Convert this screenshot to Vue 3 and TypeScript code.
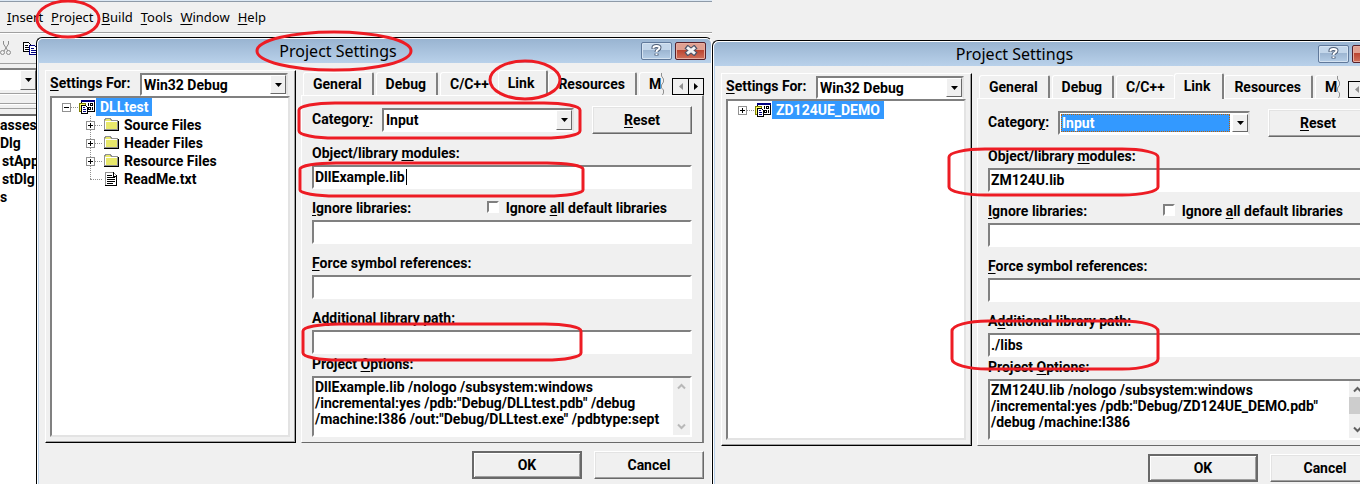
<script setup lang="ts">
import { h, reactive, type FunctionalComponent } from 'vue'

interface TreeItem {
  label: string
  kind: 'folder' | 'file'
}

interface DialogModel {
  id: string
  project: string
  expanded: boolean
  items: TreeItem[]
  config: string
  category: string
  categoryFocused: boolean
  caret: boolean
  modules: string
  ignored: string
  ignoreAll: boolean
  symbols: string
  path: string
  options: string
  scrollable: boolean
  tab: string
}

/* "&" marks the access key of a caption. */
const Caption: FunctionalComponent<{ text: string }> = ({ text }) => {
  const at = text.indexOf('&')
  return h('span', at < 0 ? [text] : [text.slice(0, at), h('u', text[at + 1]), text.slice(at + 2)])
}
Caption.props = ['text']

const menus = ['&Insert', '&Project', '&Build', '&Tools', '&Window', '&Help']
const classNames = ['asses', 'Dlg', 'stApp', 'stDlg', 's']
const tabs = ['General', 'Debug', 'C/C++', 'Link', 'Resources', 'M']

const dialogs = reactive<DialogModel[]>([
  {
    id: 'dll',
    project: 'DLLtest',
    expanded: true,
    items: [
      { label: 'Source Files', kind: 'folder' },
      { label: 'Header Files', kind: 'folder' },
      { label: 'Resource Files', kind: 'folder' },
      { label: 'ReadMe.txt', kind: 'file' },
    ],
    config: 'Win32 Debug',
    category: 'Input',
    categoryFocused: false,
    caret: true,
    modules: 'DllExample.lib',
    ignored: '',
    ignoreAll: false,
    symbols: '',
    path: '',
    options:
      'DllExample.lib /nologo /subsystem:windows\n/incremental:yes /pdb:"Debug/DLLtest.pdb" /debug\n/machine:I386 /out:"Debug/DLLtest.exe" /pdbtype:sept',
    scrollable: false,
    tab: 'Link',
  },
  {
    id: 'demo',
    project: 'ZD124UE_DEMO',
    expanded: false,
    items: [],
    config: 'Win32 Debug',
    category: 'Input',
    categoryFocused: true,
    caret: false,
    modules: 'ZM124U.lib',
    ignored: '',
    ignoreAll: false,
    symbols: '',
    path: './libs',
    options:
      'ZM124U.lib /nologo /subsystem:windows\n/incremental:yes /pdb:"Debug/ZD124UE_DEMO.pdb"\n/debug /machine:I386',
    scrollable: true,
    tab: 'Link',
  },
])
</script>

<template>
  <main class="desktop">
    <section class="ide">
      <nav class="menubar">
        <button v-for="m in menus" :key="m" type="button"><Caption :text="m" /></button>
      </nav>
      <div class="toolbar">
        <button type="button" aria-label="Cut">
          <svg width="12" height="15" viewBox="0 0 12 15" fill="none" stroke="#8c8c8c">
            <path d="M3.500 0v3l4.500 7M8.500 0v3l-4.500 7" />
            <circle cx="2.500" cy="11.500" r="2" /><circle cx="8.500" cy="11.500" r="2" />
          </svg>
        </button>
        <button type="button" aria-label="Copy">
          <svg width="16" height="14" viewBox="0 0 16 14" shape-rendering="crispEdges">
            <path d="M.5.5h5l3 3v6h-8z" fill="#fff" stroke="#000" />
            <path d="M2 3h3M2 5h5M2 7h5" stroke="#000" transform="translate(0 .5)" />
            <path d="M6.500 3.500h5l3 3v6h-8z" fill="#fff" stroke="#000080" />
            <path d="M8 6h3M8 8h5M8 10h5" stroke="#000080" transform="translate(0 .5)" />
          </svg>
        </button>
      </div>
      <div class="combobar">
        <span class="combo-text"></span>
        <button type="button" class="arrow" aria-label="Open class list">
          <svg width="7" height="4" viewBox="0 0 7 4"><path d="M0 0h7L3.500 4z" /></svg>
        </button>
      </div>
      <div class="rail"></div>
      <ul class="classes">
        <li v-for="(c, i) in classNames" :key="c" :class="{ nested: i === 2 || i === 3 }">{{ c }}</li>
      </ul>
    </section>

    <section v-for="d in dialogs" :key="d.id" class="dialog" :class="d.id">
      <header class="titlebar">
        <h2>Project Settings</h2>
        <button type="button" class="help" aria-label="Help">
          <svg width="11" height="13" viewBox="0 0 11 13" fill="none">
            <path d="M2.500 5V3.500q0-1.500 3-1.500t3 1.500q0 1.500-1.500 2.200T5.500 8M5.500 9.500v2" stroke="#4f5f78" stroke-width="4" />
            <path d="M2.500 4.500v-1q0-1.500 3-1.500t3 1.500q0 1.500-1.500 2.200T5.500 8M5.500 9.500v1.500" stroke="#fff" stroke-width="2" />
          </svg>
        </button>
        <button type="button" class="close" aria-label="Close">
          <svg width="14" height="11" viewBox="0 0 14 11" fill="none">
            <path d="M2 1.500l10 8M12 1.500l-10 8" stroke="#4d5468" stroke-width="5" />
            <path d="M3 2.300l8 6.400M11 2.300l-8 6.400" stroke="#f4f4f6" stroke-width="3" />
          </svg>
        </button>
      </header>

      <div class="body">
        <div class="project">
          <div class="config">
            <label :for="d.id + '-config'"><Caption text="&Settings For:" /></label>
            <span class="drop">
              <select :id="d.id + '-config'" v-model="d.config">
                <option>Win32 Debug</option>
                <option>Win32 Release</option>
              </select>
              <span class="arrow"><svg width="7" height="4" viewBox="0 0 7 4"><path d="M0 0h7L3.500 4z" /></svg></span>
            </span>
          </div>
          <div class="tree">
            <div class="node root">
              <button type="button" class="toggle" :aria-label="d.expanded ? 'Collapse' : 'Expand'" @click="d.expanded = !d.expanded">
                <svg width="9" height="9" viewBox="0 0 9 9" fill="none" shape-rendering="crispEdges">
                  <rect x=".5" y=".5" width="8" height="8" fill="#fff" stroke="#919191" />
                  <path :d="d.expanded ? 'M2 4.500h5' : 'M2 4.500h5M4.500 2v5'" stroke="#000" />
                </svg>
              </button>
              <i class="dots"></i>
              <svg class="glyph" width="17" height="16" viewBox="0 0 17 16" fill="none" shape-rendering="crispEdges">
                <rect x="2.500" y="1.500" width="13" height="11" fill="#fff" stroke="#000" />
                <path d="M2 1h14v2H2z" fill="#000080" />
                <path d="M9.500 4v3M11.500 4.500h2v2h-2zM13.500 8v3M9.500 8.500h2v2h-2z" stroke="#000" />
                <path d="M.5 4.500h6v8h-6z" fill="#ffff66" stroke="#808000" />
                <path d="M2.500 6.500h4l2 2v6h-6z" fill="#fff" stroke="#000" />
                <path d="M4 8.500h2M4 10.500h3M4 12.500h3" stroke="#000080" />
              </svg>
              <span class="picked">{{ d.project }}</span>
            </div>
            <ul v-if="d.expanded && d.items.length" class="branch">
              <li v-for="item in d.items" :key="item.label" class="node">
                <button v-if="item.kind === 'folder'" type="button" class="toggle" aria-label="Expand">
                  <svg width="9" height="9" viewBox="0 0 9 9" fill="none" shape-rendering="crispEdges">
                    <rect x=".5" y=".5" width="8" height="8" fill="#fff" stroke="#919191" />
                    <path d="M2 4.500h5M4.500 2v5" stroke="#000" />
                  </svg>
                </button>
                <i class="dots" :class="{ long: item.kind === 'file' }"></i>
                <svg v-if="item.kind === 'folder'" class="glyph" width="17" height="16" viewBox="0 0 17 16" fill="none" shape-rendering="crispEdges">
                  <path d="M1.500 3.500l1-2h5l1 2h6v9h-13z" fill="#e8e86a" stroke="#919191" />
                  <path d="M2 4.500h12M2.500 4v8" stroke="#fff" />
                  <path d="M1 13.500h14.500V4" stroke="#000" />
                </svg>
                <svg v-else class="glyph" width="17" height="16" viewBox="0 0 17 16" fill="none" shape-rendering="crispEdges">
                  <path d="M2.500 1.500h8l3 3v10h-11z" fill="#fff" stroke="#919191" />
                  <path d="M10.500 1v4h3.500M2 14.500h12M13.500 4v11" stroke="#000" />
                  <path d="M4 4.500h5M4 6.500h8M4 8.500h8M4 10.500h8M4 12.500h6" stroke="#000" />
                </svg>
                <span>{{ item.label }}</span>
              </li>
            </ul>
          </div>
        </div>

        <div class="settings">
          <div class="strip">
            <div class="tabs" role="tablist">
              <button v-for="t in tabs" :key="t" type="button" role="tab" :aria-selected="d.tab === t" :class="{ on: d.tab === t, cut: t === 'M', before: t === 'C/C++' }">{{ t }}</button>
              <svg class="tear" width="4" height="22" viewBox="0 0 4 22" fill="none" stroke="#919191">
                <path d="M.5 0v3l2 3v3l-2 3v3l2 2v3l-1 2" />
              </svg>
            </div>
            <div class="spin">
              <button type="button" aria-label="Previous tabs"><svg width="4" height="7" viewBox="0 0 4 7"><path d="M4 0v7L0 3.500z" fill="#919191" /></svg></button>
              <button type="button" aria-label="Next tabs"><svg width="4" height="7" viewBox="0 0 4 7"><path d="M0 0v7l4-3.500z" /></svg></button>
            </div>
          </div>
          <div class="pane">
            <div class="category">
              <label :for="d.id + '-category'"><Caption text="Categor&y:" /></label>
              <span class="drop" :class="{ focused: d.categoryFocused }">
                <select :id="d.id + '-category'" v-model="d.category">
                  <option>General</option>
                  <option>Input</option>
                </select>
                <span class="arrow"><svg width="7" height="4" viewBox="0 0 7 4"><path d="M0 0h7L3.500 4z" /></svg></span>
              </span>
              <button type="button" class="push"><Caption text="&Reset" /></button>
            </div>
            <div class="field">
              <label :for="d.id + '-modules'"><Caption text="Object/library &modules:" /></label>
              <div class="entry">
                <input :id="d.id + '-modules'" v-model="d.modules" type="text" spellcheck="false" />
                <i v-if="d.caret" class="caret"></i>
              </div>
            </div>
            <div class="field">
              <div class="pair">
                <label :for="d.id + '-ignored'"><Caption text="&Ignore libraries:" /></label>
                <span class="check">
                  <input :id="d.id + '-all'" v-model="d.ignoreAll" type="checkbox" />
                  <label :for="d.id + '-all'"><Caption text="Ignore &all default libraries" /></label>
                </span>
              </div>
              <input :id="d.id + '-ignored'" v-model="d.ignored" type="text" />
            </div>
            <div class="field">
              <label :for="d.id + '-symbols'"><Caption text="&Force symbol references:" /></label>
              <input :id="d.id + '-symbols'" v-model="d.symbols" type="text" />
            </div>
            <div class="field">
              <label :for="d.id + '-path'"><Caption text="A&dditional library path:" /></label>
              <input :id="d.id + '-path'" v-model="d.path" type="text" spellcheck="false" />
            </div>
            <div class="field tight">
              <label :for="d.id + '-options'"><Caption text="Project &Options:" /></label>
              <div class="memo" :class="{ live: d.scrollable }">
                <textarea :id="d.id + '-options'" v-model="d.options" spellcheck="false"></textarea>
                <div class="scroll">
                  <svg width="9" height="7" viewBox="0 0 9 7" fill="none"><path d="M1 5.500L4.500 2 8 5.500" /></svg>
                  <i v-if="d.scrollable"></i>
                  <svg width="9" height="7" viewBox="0 0 9 7" fill="none"><path d="M1 1.500L4.500 5 8 1.500" /></svg>
                </div>
              </div>
            </div>
          </div>
        </div>
      </div>

      <footer>
        <button type="button" class="push default">OK</button>
        <button type="button" class="push">Cancel</button>
      </footer>
    </section>

    <svg class="marks" fill="none" stroke="#ed1c24" stroke-width="3" aria-hidden="true">
      <ellipse cx="68" cy="19" rx="31" ry="18" />
      <ellipse cx="334" cy="51" rx="77" ry="19" />
      <ellipse cx="525" cy="80" rx="35" ry="19" />
      <rect x="299" y="103" width="281" height="35" rx="36" ry="7" />
      <rect x="300" y="163" width="283" height="33" rx="36" ry="6" />
      <rect x="303" y="324" width="278" height="36" rx="36" ry="7" />
      <rect x="949" y="149" width="209" height="46" rx="36" ry="8" />
      <rect x="952" y="321" width="206" height="48" rx="36" ry="10" />
    </svg>
  </main>
</template>

<style>
body {
  background: #f0f0f0;
}
</style>

<style scoped>
.desktop,
.desktop * {
  box-sizing: border-box;
}
.desktop {
  position: relative;
  display: grid;
  grid-template-columns: minmax(0, 89fr) minmax(0, 81fr);
  min-height: 100vh;
  max-height: 100vh;
  overflow: hidden;
  background: #f0f0f0;
  color: #000;
  font: bold 14px/16px Roboto, 'Liberation Sans', sans-serif;
}
button,
input,
select,
textarea {
  margin: 0;
  padding: 0;
  border: 0;
  border-radius: 0;
  background: none;
  color: inherit;
  font: inherit;
  outline: none;
}
svg {
  display: block;
  flex: none;
}
ul {
  margin: 0;
  padding: 0;
  list-style: none;
}
:deep(u) {
  text-decoration-thickness: 1px;
  text-underline-offset: 2px;
}

/* main window */
.ide {
  grid-area: 1 / 1;
  display: flex;
  flex-direction: column;
  border-top: 1px solid #dce8f4;
}
.menubar {
  display: flex;
  gap: 8px;
  height: 32px;
  padding-left: 7px;
  border-top: 1px solid #8e9aa8;
  border-bottom: 1px solid #a0a0a0;
  font: 13px/16px 'Noto Sans', 'Open Sans', sans-serif;
}
.toolbar {
  display: flex;
  align-items: center;
  gap: 11px;
  height: 31px;
  border-top: 1px solid #fff;
  border-bottom: 1px solid #a0a0a0;
}
.combobar {
  display: flex;
  width: 36px;
  height: 22px;
  margin-top: 4px;
  border-top: 2px solid #808080;
  background: #fff;
}
.combo-text {
  flex: 1;
}
.rail {
  height: 26px;
  border-bottom: 2px solid #696969;
  background: linear-gradient(#f0f0f0 3px, #a0a0a0 3px 4px, #fff 4px 5px, #f0f0f0 5px 13px, #a0a0a0 13px 14px, #fff 14px 15px, #f0f0f0 15px 18px, #a0a0a0 18px 19px, #f0f0f0 19px);
}
.classes {
  flex: 1;
  background: #fff;
}
.classes li {
  height: 18px;
  line-height: 18px;
}
.classes .nested {
  padding-left: 2px;
}

/* dialogs */
.dialog {
  position: relative;
  display: flex;
  flex-direction: column;
  border: solid #000;
  border-width: 1px 0 0 1px;
  border-radius: 6px 6px 0 0;
  background: #f0f0f0;
  box-shadow: inset 1px 1px 0 #fff, inset 2px 0 0 #b9d1ea;
}
.dll {
  grid-area: 1 / 1;
  margin: 37px 0 0 36px;
  border-right: 1px solid #fff;
}
.demo {
  grid-area: 1 / 2;
  width: calc(100% + 28px);
  margin-top: 40px;
}
.titlebar {
  display: flex;
  align-items: center;
  gap: 3px;
  height: 24px;
  margin: 1px 0 0 1px;
  padding-right: 5px;
  border-radius: 5px 5px 0 0;
  background: linear-gradient(#99b4d1, #b9d1ea);
}
h2 {
  flex: 1;
  margin: 0;
  text-align: center;
  font: 16px/20px 'Noto Sans', 'Open Sans', sans-serif;
}
.titlebar button {
  display: grid;
  place-items: center;
  width: 31px;
  height: 18px;
  margin-bottom: 1px;
  border: 1px solid #60799b;
  border-radius: 2px;
  background: linear-gradient(#c3d6ea 45%, #9cb5d1 45%, #b5cde6);
  box-shadow: inset 0 0 0 1px #d5e3f1;
}
.titlebar .close {
  border-color: #56202a;
  background: linear-gradient(#e0a091 45%, #bb4430 45%, #d0705b);
  box-shadow: inset 0 0 0 1px #e6ada0;
}
.body {
  display: grid;
  grid-template-columns: minmax(0, 251fr) minmax(0, 403fr);
  gap: 5px;
  padding: 7px 7px 0 8px;
}
.demo .body {
  padding-right: 8px;
}
.project {
  display: flex;
  flex-direction: column;
  padding: 2px 5px 5px 4px;
  border: 1px solid;
  border-color: #fff #000 #000 #fff;
  box-shadow: inset -1px -1px 0 #a0a0a0;
}
.config {
  display: flex;
  justify-content: space-between;
  padding-right: 2px;
}
.config label {
  padding-top: 2px;
}
.config .drop {
  width: 148px;
  height: 23px;
}
.tree {
  flex: 1;
  padding-left: 10px;
  border: 2px solid;
  border-color: #808080 #e3e3e3 #e3e3e3 #808080;
  background: #fff;
}
.node {
  display: flex;
  align-items: center;
  height: 18px;
}
.toggle {
  width: 9px;
  height: 9px;
}
.dots {
  width: 7px;
  margin-right: 1px;
  border-top: 1px dotted #919191;
}
.dots.long {
  width: 12px;
  margin-left: 4px;
}
.glyph {
  margin-right: 4px;
}
.root .glyph {
  margin-right: 0;
}
.picked {
  padding: 1px 4px;
  background: #3399ff;
  color: #fff;
}
.branch {
  margin-left: 24px;
  background: repeating-linear-gradient(#919191 0 1px, #fff 1px 2px) 4px 0 / 1px 63px no-repeat;
}

/* drop-downs */
.drop {
  display: grid;
  height: 24px;
  border: 2px solid;
  border-color: #808080 #e3e3e3 #fff #808080;
  background: #fff;
}
.drop > * {
  grid-area: 1 / 1;
}
.drop select {
  width: 100%;
  padding-left: 2px;
  appearance: none;
}
.arrow {
  display: grid;
  place-items: center;
  justify-self: end;
  width: 16px;
  border: 1px solid;
  border-color: #fff #696969 #696969 #fff;
  background: #f0f0f0;
  pointer-events: none;
}
.focused {
  padding: 1px 0 1px 1px;
}
.focused select {
  width: calc(100% - 18px);
  padding-left: 0;
  border: 1px dotted #c06000;
  background: #3399ff;
  color: #fff;
}

/* tab strip */
.settings {
  display: flex;
  flex-direction: column;
}
.strip {
  display: flex;
  justify-content: space-between;
  align-items: flex-end;
  height: 25px;
}
.tabs {
  display: flex;
  align-items: flex-end;
  padding-left: 2px;
}
.tabs button {
  height: 23px;
  margin-right: 2px;
  padding: 0 10px 0 9px;
  border: solid;
  border-width: 1px 2px 0 1px;
  border-color: #fff #808080 #fff #fff;
  border-radius: 3px 2px 0 0;
}
.tabs .on {
  position: relative;
  height: 26px;
  margin: 0 0 -1px 0;
  padding: 0 12px 1px 9px;
  background: #f0f0f0;
}
.tabs .before {
  margin-right: 0;
  padding-right: 9px;
  border-right: 0;
}
.tabs .cut {
  margin-right: 0;
  padding-right: 0;
  border-right: 0;
}
.spin {
  display: flex;
  border: 1px solid #000;
}
.spin button {
  display: grid;
  place-items: center;
  width: 15px;
  height: 15px;
}
.spin button + button {
  border-left: 1px solid #000;
}
.pane {
  padding: 10px 10px 5px;
  border: solid;
  border-width: 1px 2px 1px 1px;
  border-color: #fff #808080 #696969 #fff;
}
.category {
  display: flex;
  height: 28px;
}
.category label {
  width: 70px;
  padding-top: 5px;
}
.category .drop {
  flex: 1;
  margin: 2px 18px 0 0;
}
.push {
  width: 100px;
  height: 28px;
  border: 1px solid;
  border-color: #fff #696969 #696969 #fff;
  box-shadow: inset -1px -1px 0 #a0a0a0, inset 1px 1px 0 #e3e3e3;
}
.push.default {
  border: 2px solid;
  border-color: #696969;
  box-shadow: inset 1px 1px 0 #fff, inset -1px -1px 0 #a0a0a0;
}
.field {
  display: flex;
  flex-direction: column;
  gap: 3px;
  margin-top: 10px;
  line-height: 18px;
}
.field.tight {
  margin-top: 1px;
}
.field input[type='text'] {
  width: 100%;
  height: 24px;
  padding: 0 1px;
  border: 2px solid;
  border-color: #808080 #fff #fff #808080;
  background: #fff;
}
.entry {
  position: relative;
  display: flex;
}
.caret {
  position: absolute;
  left: 94px;
  top: 4px;
  width: 1px;
  height: 16px;
  background: #000;
}
.pair {
  display: flex;
  justify-content: space-between;
}
.check {
  display: flex;
  gap: 7px;
  padding-right: 25px;
}
.check input {
  width: 12px;
  height: 12px;
  margin-top: 2px;
  border: 2px solid;
  border-color: #808080 #fff #fff #808080;
  background: #fff;
  appearance: none;
}
.check input:checked {
  background: #000;
}
.memo {
  display: flex;
  height: 61px;
  border: 2px solid;
  border-color: #808080 #fff #fff #808080;
  background: #fff;
}
.memo textarea {
  flex: 1;
  min-width: 0;
  padding: 1px 0 0 1px;
  line-height: 16px;
  white-space: pre;
  overflow: hidden;
  resize: none;
}
.scroll {
  display: flex;
  flex-direction: column;
  align-items: center;
  justify-content: space-between;
  width: 17px;
  padding: 5px 0;
  background: #f0f0f0;
  stroke: #b8b8b8;
  stroke-width: 2px;
}
.live .scroll {
  stroke: #606060;
}
.scroll i {
  width: 17px;
  height: 17px;
  margin-bottom: 8px;
  background: #cdcdcd;
}
footer {
  display: flex;
  justify-content: flex-end;
  gap: 12px;
  padding: 8px 7px 4px 0;
}
.demo footer {
  padding-right: 8px;
}
footer .push {
  width: 110px;
}

.marks {
  position: absolute;
  inset: 0;
  width: 100%;
  height: 100%;
  pointer-events: none;
}
</style>
